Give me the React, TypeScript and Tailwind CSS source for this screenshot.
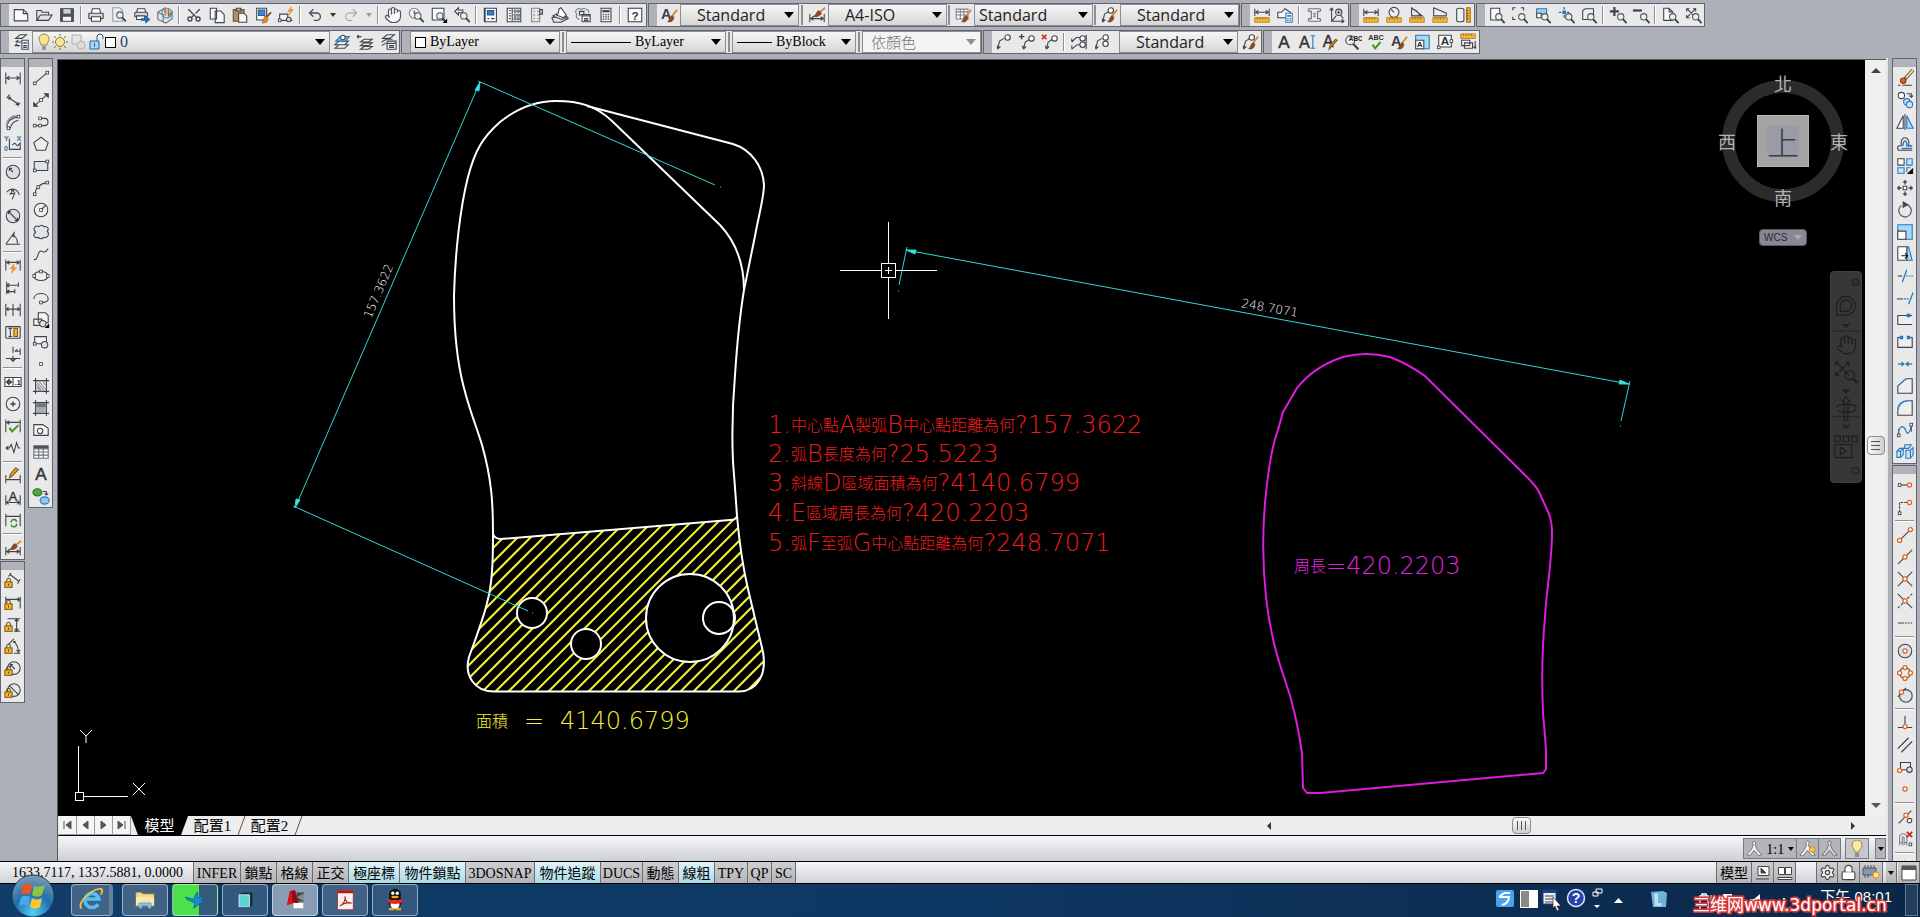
import React, { useState } from 'react';
import { Hand, Scissors, Undo2, Redo2, Settings, Lock } from 'lucide-react';

const Lens = ({ x = 12, y = 11 }: { x?: number; y?: number }) => (
  <>
    <circle cx={x} cy={y} r="3.5" fill="#e6f0ee" stroke="#4d5a5a" />
    <path d={`M${x + 2.5} ${y + 2.5}l4 4.5`} stroke="#3b4444" strokeWidth="2" />
  </>
);

const Brush = () => (
  <>
    <path d="M19 4l-6 8" stroke="#d78a3c" strokeWidth="2" />
    <path d="M13.500 10.500l2 2c-.5 4-3 6-7 5 2-1 2-5 5-7z" fill="#8a4a24" stroke="#6b3516" strokeWidth=".6" />
  </>
);

const Ruler = ({ y = 13 }: { y?: number }) => (
  <>
    <rect x="2" y={y} width="16" height="5" fill="#f2b632" stroke="#a9710c" strokeWidth=".8" />
    <path d={`M5 ${y}v2M8 ${y}v2M11 ${y}v2M14 ${y}v2`} stroke="#7a4e05" strokeWidth=".8" />
  </>
);

const Node = ({ x, y }: { x: number; y: number }) => (
  <rect x={x - 1.5} y={y - 1.5} width="3" height="3" fill="#fff" stroke="#33373d" strokeWidth=".9" />
);

const Snap = ({ x, y }: { x: number; y: number }) => (
  <circle cx={x} cy={y} r="2.300" fill="#fff" stroke="#e2641c" strokeWidth="1.400" />
);

const LockBadge = () => (
  <>
    <path d="M3 11V9a2 2 0 0 1 4 0v2" stroke="#6b4a10" />
    <rect x="1" y="11" width="8" height="6" fill="#f2b632" stroke="#8a5a0c" />
    <path d="M5 13v2" stroke="#5a3505" />
  </>
);

const dim = 'M2 4v13M18 4v13M2 10h16M6 8l-3 2 3 2M14 8l3 2-3 2';
const leader = 'M3 18l2-9 5-3M3 18l-.500-4M3 18l3-3';

const icons: Record<string, React.ReactNode> = {
  new: <path d="M2.500 4h10l5 4.500v8h-15zM12.500 4v4.500h5" fill="#f8f9fa" />,
  open: <path d="M2 16V5h5l1 2h7v3M2 16l4-6h13l-4 6z" fill="#e2e5e8" />,
  save: (
    <>
      <path d="M3 3h14v14H3z" fill="#4c525a" />
      <path d="M6 3.500h8v5H6z" fill="#cdd3d8" stroke="none" />
      <path d="M5.500 12h9v4.500h-9z" fill="#f4f4f4" stroke="none" />
    </>
  ),
  print: (
    <>
      <path d="M5 8l1-5h8l1 5" fill="#fff" />
      <rect x="2" y="8" width="16" height="6" rx="1" fill="#d5d8db" />
      <path d="M5 12h10v5H5z" fill="#fff" />
    </>
  ),
  preview: (
    <>
      <path d="M3 2h8l3 3v12H3z" fill="#e9edf0" stroke="#9aa0a8" />
      <Lens x={11} y={10} />
    </>
  ),
  plot: (
    <>
      <path d="M4 7l1-4h8l1 4" fill="#fff" />
      <rect x="2" y="7" width="14" height="5" rx="1" fill="#d5d8db" />
      <path d="M4 11h9v4H4z" fill="#fff" />
      <path d="M9 14h5v-3l5 4-5 4v-3H9z" fill="#1f6fc4" stroke="#164f8d" strokeWidth=".6" />
    </>
  ),
  web: (
    <>
      <path d="M2 7l8-5 8 4v8l-7 5-9-4z" fill="#dfe6ea" stroke="#6b7179" />
      <circle cx="12" cy="8" r="5.500" fill="#bfe0f4" stroke="#4f93bf" />
      <path d="M9 4c0 3 1 4 3 4l2-4z" fill="#e2b13c" stroke="none" />
      <path d="M12 8l3 4c2-1 2-3 2-5z" fill="#57ab57" stroke="none" />
      <path d="M10 3v8M14 3v9" stroke="#d0532e" />
      <path d="M2 7l6 3v8" stroke="#6b7179" />
    </>
  ),
  cut: <Scissors x="1" y="1" width="18" height="18" strokeWidth={2} stroke="#3f444c" transform="rotate(-90 10 10)" />,
  copy: <path d="M2.500 2.500h7v12h-7zM8 5.500h6l4 4v9H8z" fill="#f6f7f8" />,
  paste: (
    <>
      <path d="M2.500 4h12v13h-12z" fill="#b58c5c" stroke="#6d5233" />
      <path d="M6 2.500h5v3H6z" fill="#bbb" />
      <path d="M8.500 8h6l3 3v7h-9z" fill="#f6f7f8" />
    </>
  ),
  match: (
    <>
      <path d="M3 2.500h11v13H3z" fill="#fff" />
      <path d="M5 4.500h7v6H5z" fill="#3b87cd" stroke="#2461a0" />
      <path d="M19 7l-5 5" stroke="#8a4a1c" strokeWidth="2" />
      <path d="M12 11l4 3-2 4-5 1z" fill="#e38b24" stroke="#a45a10" strokeWidth=".7" />
    </>
  ),
  blockedit: (
    <>
      <path d="M3 9h9v7H3zM12 16h5" fill="#f4f4f4" />
      <Node x={3} y={16} />
      <circle cx="13" cy="15" r="2.500" fill="#ddd" />
      <path d="M16 1l-4 5h3l-2 4 5-6h-3z" fill="#f6a21b" stroke="#d97b06" strokeWidth=".6" />
    </>
  ),
  undo: <Undo2 x="1" y="1" width="18" height="18" strokeWidth={2} stroke="#4c525a" />,
  redo: <Redo2 x="1" y="1" width="18" height="18" strokeWidth={1.5} stroke="#9b9ea4" />,
  hand: <Hand x="0" y="0" width="20" height="20" strokeWidth={1.6} stroke="#4c525a" fill="#fafafa" />,
  zoomrt: (
    <>
      <circle cx="8" cy="8" r="5.500" fill="#f4f4f4" stroke="#7c828a" />
      <path d="M8 5v3h3" />
      <Lens x={12} y={11} />
    </>
  ),
  zoomwin: (
    <>
      <path d="M2.500 2.500h13v13h-13z" fill="#fafafa" />
      <Lens x={11} y={11} />
      <path d="M19 14v5h-5z" fill="#000" stroke="none" />
    </>
  ),
  zoomprev: (
    <>
      <path d="M2 6l4-4v2.500h5v3H6V10z" fill="#dfe3e6" />
      <Lens x={12} y={11} />
    </>
  ),
  props: (
    <>
      <path d="M3 2.500h13v15H3z" fill="#fff" />
      <path d="M6 5h7v5H6z" fill="#2f7fc9" stroke="#1d5a96" />
      <path d="M6 14h2M10 14h4" />
      <path d="M3 2.500v15" strokeWidth="2" />
    </>
  ),
  center: (
    <>
      <path d="M2.500 2.500h15v15h-15z" fill="#fff" />
      <path d="M4.500 5h2M4.500 8h2M4.500 11h2M4.500 14h2M8 3v14" />
      <path d="M10 4.500h2.500V7H10zM14 4.500h2V7h-2zM10 9h2.500v2.500H10zM14 9h2v2.500h-2zM10 13h2.500v2.500H10zM14 13h2v2.500h-2z" fill="#b5c4d4" strokeWidth=".8" />
    </>
  ),
  palettes: (
    <>
      <path d="M4 2.500h9v15H4z" fill="#eee" stroke="#7c828a" />
      <path d="M13 4h3v5h-3z" fill="#ccc" />
      <path d="M6 5h2v2H6zM10 5h2v2h-2zM6 9h2v2H6zM10 9h2v2h-2zM6 13h2v2H6zM10 13h2v2h-2z" fill="#aaa" stroke="none" />
    </>
  ),
  sheets: (
    <>
      <path d="M1 13l10-2 8 3-8 4H3z" fill="#dfe2e5" />
      <path d="M2 11l4-2 12 3-6 3z" fill="#eef0f2" />
      <path d="M9 3l2-1 6 8-3 3-8-3 2-2z" fill="#fff" />
    </>
  ),
  markup: (
    <>
      <path d="M3 4c2-2 4-1 5 0 2-2 5-1 6 0 3 0 3 3 2 4M3 4c-2 2-1 4 0 5-1 3 0 5 3 6" fill="none" stroke="#7c828a" />
      <path d="M6 6h5v4H6z" fill="#d9dde0" />
      <path d="M9 9.500h9v8H9z" fill="#fff" />
      <path d="M9 11h9M11 14h5M11 16h5" />
    </>
  ),
  calc: (
    <>
      <path d="M4.500 2.500h11v15h-11z" fill="#eceef0" />
      <path d="M6 4.500h8v2.500H6z" fill="#3f444c" stroke="none" />
      <path d="M6.500 9.500h7M6.500 12h7M6.500 14.500h7" strokeDasharray="1.500 1.200" strokeWidth="1.500" />
    </>
  ),
  help: (
    <>
      <rect x="2.500" y="2.500" width="15" height="15" fill="#fafafa" />
      <text x="10" y="15" textAnchor="middle" fontSize="13" fontWeight="bold" fill="#33373d" stroke="none">?</text>
    </>
  ),
  textstyle: (
    <>
      <text x="1" y="14" fontSize="16" fontWeight="bold" fill="#3a3f46" stroke="none">A</text>
      <Brush />
    </>
  ),
  dimstyle: (
    <>
      <path d="M2 9v9M18 9v9M2 14h16M6 12l-3 2 3 2M14 12l3 2-3 2" />
      <path d="M19 2l-6 5" stroke="#d78a3c" strokeWidth="2" />
      <path d="M12 5l3 3c-2 4-6 4-10 4 4-1 4-6 7-7z" fill="#8a4a24" stroke="#6b3516" strokeWidth=".6" />
    </>
  ),
  tablestyle: (
    <>
      <path d="M2.500 3.500h13v11h-13zM2.500 6.500h13M2.500 10h13M7 3.500v11M11 3.500v11" fill="#fff" stroke="#7c828a" />
      <Brush />
    </>
  ),
  leaderstyle: (
    <>
      <path d={leader} />
      <circle cx="12" cy="5" r="3" fill="#fff" />
      <Brush />
    </>
  ),
  distance: (
    <>
      <path d="M2 3v8M18 3v8M2 7h16M6 5L3 7l3 2M14 5l3 2-3 2" />
      <Ruler />
    </>
  ),
  area: (
    <>
      <path d="M2 13V7h4l4-4 6 4v6z" fill="#f6f7f8" />
      <path d="M11 8h7v10h-7z" fill="#fff" stroke="#2b77bb" />
      <path d="M12.500 10h4v2h-4z" fill="#2b77bb" stroke="none" />
      <path d="M12.500 14h4M12.500 16h4" stroke="#2b77bb" strokeWidth="1.400" strokeDasharray="1.500 1" />
    </>
  ),
  list: (
    <>
      <path d="M5 3h11c2 0 2 3 0 3h-2v8h2c2 0 2 3 0 3H5c-2 0-2-3 0-3h2V6H5c-2 0-2-3 0-3z" fill="#eceef0" stroke="#6b7179" />
      <path d="M9 8h3M9 10h3M9 12h3" stroke="#6b7179" />
    </>
  ),
  locate: (
    <>
      <path d="M4 2v15h14M4 2L2 5M4 2l2 3M18 17l-3-2M18 17l-3 2M4 17l5-6" />
      <circle cx="12" cy="7" r="3.500" />
      <path d="M12 5v4M10 7h4M14 10l3 4" />
    </>
  ),
  radius: (
    <>
      <circle cx="10" cy="7" r="5.500" fill="#eef0f1" />
      <path d="M10 7L7 4" />
      <Ruler />
    </>
  ),
  angle: (
    <>
      <path d="M4 2v9h12zM4 3c5 1 8 4 9 8" />
      <Ruler />
    </>
  ),
  area2: (
    <>
      <path d="M3 2v9h14V8z" fill="#eef0f1" />
      <Ruler />
    </>
  ),
  volume: (
    <>
      <path d="M3 4c0-2 8-2 8 0v12c0 2-8 2-8 0z" fill="#eef0f1" />
      <path d="M14 2h4v16h-4z" fill="#f2b632" stroke="#a9710c" />
      <path d="M14 5h2M14 8h2M14 11h2M14 14h2" stroke="#7a4e05" />
    </>
  ),
  zwindow: (
    <>
      <path d="M3 2.500h10v13H3z" fill="#fafafa" />
      <Lens x={12} y={12} />
    </>
  ),
  zdynamic: (
    <>
      <path d="M2 5V2h3M11 2h3v3M2 12v3h3" />
      <Lens x={12} y={12} />
    </>
  ),
  zscale: (
    <>
      <path d="M3 3h11v9H3z" fill="#9fd0f0" stroke="#2b77bb" />
      <path d="M3 8h5v5H3z" fill="#fff" />
      <Lens x={12} y={12} />
    </>
  ),
  zcenter: (
    <>
      <path d="M6 5h4v4H6z" fill="#2b77bb" stroke="none" />
      <path d="M8 1v3M8 10v3M2 7h3M11 7h3" stroke="#2b77bb" strokeWidth="1.500" />
      <Lens x={13} y={12} />
    </>
  ),
  zobject: (
    <>
      <path d="M3 5l3-2h9v10l-3 2H3z" fill="#eef0f1" />
      <Lens x={12} y={12} />
    </>
  ),
  zin: (
    <>
      <path d="M6 1v10M1 6h10" strokeWidth="2.500" />
      <Lens x={13} y={12} />
    </>
  ),
  zout: (
    <>
      <path d="M1 5h10" strokeWidth="2.500" />
      <Lens x={13} y={12} />
    </>
  ),
  zall: (
    <>
      <path d="M3 2.500h6l4 4V16H3zM9 2.500v4h4" fill="#fafafa" />
      <Lens x={13} y={12} />
    </>
  ),
  zextents: (
    <>
      <path d="M3 3l10 10M13 3L3 13M3 6V3h3M10 3h3v3M3 10v3h3" />
      <Lens x={13} y={12} />
    </>
  ),
  layerprops: (
    <>
      <path d="M4 6l5-4h7l-5 4zM4 6h7M4 10h7M3 14h6M4 10l3-2M3 14l3-2" fill="#eef0f1" />
      <path d="M11 8h7v10h-7z" fill="#fff" />
      <path d="M12.500 10h4v2h-4z" fill="#2b77bb" stroke="none" />
      <path d="M12.500 14h4M12.500 16h4" />
    </>
  ),
  layercur: (
    <>
      <path d="M2 17l5-4h10l-4 4zM2 13l5-4h10l-4 4z" fill="#eef0f1" />
      <path d="M3 9l5-5h10l-4 5z" fill="#7fc1ee" stroke="#2b77bb" />
      <circle cx="11" cy="5" r="2.500" fill="#fff" />
    </>
  ),
  layerprev: (
    <>
      <path d="M5 18l4-3h9l-4 3zM5 14l4-3h9l-4 3zM5 10l4-3h9l-4 3z" fill="#eef0f1" />
      <path d="M1 4h5M1 4l2-2M1 4l2 2" />
    </>
  ),
  layerstate: (
    <>
      <path d="M4 6l5-4h8l-5 4zM3 10l5-3h7M3 14l5-3" fill="#eef0f1" />
      <path d="M9 9h10v9H9zM9 11.500h10M11 14h6M11 16h6" fill="#fff" />
    </>
  ),
  leader: (
    <>
      <path d={leader} />
      <circle cx="14" cy="5" r="3" fill="#fff" />
    </>
  ),
  leaderadd: (
    <>
      <path d="M6 18l2-8 5-3M6 18l-1-4M6 18l3-3" />
      <circle cx="15" cy="6" r="3" fill="#fff" />
      <path d="M4 1v6M1 4h6" strokeWidth="1.500" />
    </>
  ),
  leaderdel: (
    <>
      <path d="M6 18l2-8 5-3M6 18l-1-4M6 18l3-3" />
      <circle cx="15" cy="6" r="3" fill="#fff" />
      <path d="M1 2l5 5M6 2L1 7" stroke="#c8281e" strokeWidth="1.800" />
    </>
  ),
  leaderalign: (
    <>
      <path d="M2 10l5-5h4M2 18l6-5h3M2 10V6M2 18v-4M18 2v16" />
      <circle cx="14" cy="6" r="3" fill="#fff" />
      <circle cx="14" cy="13" r="3" fill="#fff" />
    </>
  ),
  leadercollect: (
    <>
      <path d="M3 18l2-9 5-3M3 18v-4M3 18l3-3" />
      <circle cx="14" cy="5" r="3" fill="#fff" />
      <circle cx="14" cy="12" r="3" fill="#fff" />
    </>
  ),
  mtext: <text x="10" y="17" textAnchor="middle" fontSize="19" fill="#333" stroke="#333" strokeWidth=".5">A</text>,
  dtext: (
    <>
      <text x="7" y="17" textAnchor="middle" fontSize="18" fill="#333" stroke="#333" strokeWidth=".5">A</text>
      <path d="M14 3h5M16.500 3v14M14 17h5" stroke="#2b77bb" />
    </>
  ),
  edittext: (
    <>
      <text x="8" y="15" textAnchor="middle" fontSize="18" fill="#333" stroke="#333" strokeWidth=".5">A</text>
      <path d="M18 8l-7 8-2 2 1-4 6-7z" fill="#f0a22e" stroke="#8a5312" />
    </>
  ),
  find: (
    <>
      <circle cx="7" cy="8" r="5" fill="#e2eef0" />
      <path d="M10 12l6 6" strokeWidth="2.500" />
      <text x="13" y="9" textAnchor="middle" fontSize="7" fontWeight="bold" fill="#222" stroke="none">ABC</text>
    </>
  ),
  spell: (
    <>
      <text x="10" y="8" textAnchor="middle" fontSize="8" fontWeight="bold" fill="#333" stroke="none">ABC</text>
      <path d="M6 13l3 4 6-7" stroke="#3c9a1e" strokeWidth="2.200" />
    </>
  ),
  scaletext: (
    <>
      <path d="M3 2.500h15v15H3z" fill="#a9daf5" stroke="#2b77bb" />
      <path d="M3 8h9v9.500H3z" fill="#fff" />
      <text x="7.500" y="16" textAnchor="middle" fontSize="9" fontWeight="bold" fill="#222" stroke="none">A</text>
    </>
  ),
  justify: (
    <>
      <path d="M3 2.500h14v13H3z" fill="#fff" />
      <text x="10" y="13.500" textAnchor="middle" fontSize="13" fontWeight="bold" fill="#333" stroke="none">A</text>
      <Node x={3} y={16} />
      <Node x={17} y={9} />
    </>
  ),
  space: (
    <>
      <Ruler y={1} />
      <path d="M3 8h9v6H3zM6 11h9v6H6zM18 9v8M16 15l2 2 1-2" fill="#fff" />
    </>
  ),
  // dimension toolbar
  linear: <path d={dim} />,
  aligned: <path d="M3 8l3-4M15 17l3-4M5 7l11 8M5 7h3M5 7l1 3M16 15h-3M16 15l-1-3" />,
  arclen: (
    <>
      <path d="M3 16C4 9 9 5 16 4M7 17c1-5 4-8 9-9" />
      <path d="M3 13C4 8 8 4 13 3" strokeWidth="2" stroke="#8a9098" />
      <Node x={16} y={4} />
      <Node x={5} y={17} />
    </>
  ),
  ordinate: (
    <>
      <path d="M6 4v12h12V9l-3 3-3-3-3 2" />
      <text x="0" y="7" fontSize="8" fontWeight="bold" fill="#2b77bb" stroke="none">Y</text>
      <text x="14" y="7" fontSize="8" fontWeight="bold" fill="#2b77bb" stroke="none">X</text>
      <text x="0" y="18" fontSize="8" fontWeight="bold" fill="#2b77bb" stroke="none">0</text>
    </>
  ),
  dimrad: (
    <>
      <circle cx="10" cy="10" r="7.500" fill="#dcdfe2" />
      <path d="M10 10L6 6M6 9V6h3" />
    </>
  ),
  jogged: <path d="M3 8C8 2 15 4 17 11M10 5l-3 5 5-1-3 7M10 5l-2 1M10 5l1 3" />,
  diameter: (
    <>
      <circle cx="10" cy="10" r="7.500" fill="#dcdfe2" />
      <path d="M5 5l10 10M5 8V5h3M15 12v3h-3" />
    </>
  ),
  angular: <path d="M2 17h16M2 17L12 3M9 7c4 1 6 4 6 9M9 7l3-1M9 7l2 2" />,
  quick: (
    <>
      <path d="M2 3v12M18 3v12M2 6h16M6 4L3 6l3 2M14 4l3 2-3 2" />
      <path d="M11 8l-4 5h3l-2 5 6-6h-3z" fill="#f6a21b" stroke="#d97b06" strokeWidth=".6" />
    </>
  ),
  baseline: <path d="M3 3v14M16 4v5M12 11v5M3 7h13M3 14h9M6 5L3 7l3 2M6 12l-3 2 3 2" />,
  continue: <path d="M2 3v14M10 3v14M18 3v14M2 9h16M5 7L3 9l2 2M15 7l2 2-2 2" />,
  dimspace: (
    <>
      <path d="M2 4v13M18 4v13M2 4h16M2 17h16M7 6v9M5 6h4M5 15h4" />
      <path d="M11 6h4v9h-4z" fill="#f2b632" stroke="#8a5a0c" />
    </>
  ),
  dimbreak: <path d="M10 2v7M10 12v7M2 15h16M7 15l3 3 3-3M12 7h6M18 4v7M12 7l3-2" />,
  tolerance: (
    <>
      <path d="M1 5h18v10H1zM10 5v10" fill="#fff" />
      <path d="M5.500 6.500v7M2 10h7" strokeWidth="1.600" />
      <circle cx="5.500" cy="10" r="2" />
      <text x="12" y="13.500" fontSize="8" fontWeight="bold" fill="#222" stroke="none">.1</text>
    </>
  ),
  centermark: (
    <>
      <circle cx="10" cy="10" r="7.500" fill="#eceef0" />
      <path d="M10 7v6M7 10h6" strokeWidth="1.500" />
    </>
  ),
  inspect: (
    <>
      <path d="M2 3v14M18 3v14M2 6h16M6 4L3 6l3 2" />
      <path d="M6 12l3 4 7-7" stroke="#3c9a1e" strokeWidth="2.200" />
    </>
  ),
  joglin: <path d="M2 10h4l2-4 3 9 3-11 2 6h2M2 10l3-2M2 10l3 2" />,
  dimedit: (
    <>
      <path d="M2 9v9M18 9v9M2 14h16" />
      <path d="M16 3l-7 7-3 2 1-4 6-7z" fill="#f0a22e" stroke="#8a5312" />
    </>
  ),
  dimtedit: (
    <>
      <path d="M2 7v11M18 7v11M2 15h16M5 13l-2 2 2 2M15 13l2 2-2 2" />
      <text x="10" y="13" textAnchor="middle" fontSize="14" fill="#333" stroke="#333" strokeWidth=".4">A</text>
    </>
  ),
  dimupdate: (
    <>
      <path d="M2 3v14M18 3v14M2 6h16" />
      <path d="M8 13a3 3 0 0 1 6-1M14 14a3 3 0 0 1-6 1" stroke="#3c8a2e" strokeWidth="1.600" />
    </>
  ),
  dcalign: (
    <>
      <path d="M7 3l9 7M8 1l-3 4M18 8l-3 5" />
      <LockBadge />
    </>
  ),
  dchoriz: (
    <>
      <path d="M2 3v7M18 3v13M2 6h16M15 4l3 2-3 2" />
      <LockBadge />
    </>
  ),
  dcvert: (
    <>
      <path d="M4 3h14M11 17h7M14 3v14M12 6l2-3 2 3M12 14l2 3 2-3" />
      <LockBadge />
    </>
  ),
  dcang: (
    <>
      <path d="M5 7l6-6M11 17h7M10 4c4 2 6 6 6 12M10 4h3M14 13l2 3 2-3" />
      <LockBadge />
    </>
  ),
  dcrad: (
    <>
      <circle cx="11" cy="9" r="7" />
      <path d="M12 10L7 5M7 8V5h3" />
      <LockBadge />
    </>
  ),
  dcdia: (
    <>
      <circle cx="11" cy="9" r="7" />
      <path d="M6 4l10 10" />
      <LockBadge />
    </>
  ),
  // draw toolbar
  line: (
    <>
      <path d="M3 16L17 4" />
      <Node x={3} y={16} />
      <Node x={17} y={4} />
    </>
  ),
  xline: (
    <>
      <path d="M2 17L18 3" />
      <path d="M2 17v-4l4 4zM18 3v4l-4-4z" fill="#3f444c" />
      <Node x={10} y={10} />
    </>
  ),
  pline: (
    <>
      <path d="M3 14h11c5 0 5-8 0-8h-4" />
      <Node x={3} y={14} />
      <Node x={9} y={14} />
      <Node x={9} y={6} />
    </>
  ),
  polygon: <path d="M10 2.500l8 6-3 8.500H5L2 8.500z" fill="#eceef0" />,
  rect: (
    <>
      <path d="M2.500 5h15v10h-15z" fill="#dfe3e7" />
      <Node x={17} y={5} />
      <Node x={3} y={15} />
    </>
  ),
  arc: (
    <>
      <path d="M3 17C4 9 9 5 17 4" />
      <Node x={3} y={17} />
      <Node x={7} y={9} />
      <Node x={17} y={4} />
    </>
  ),
  circle: (
    <>
      <circle cx="10" cy="10" r="7.500" fill="#eceef0" />
      <path d="M10 10l5-5" />
      <Node x={10} y={10} />
    </>
  ),
  revcloud: <path d="M4 10C0 6 4 2 8 4c2-2 4-2 5 0 5-1 6 3 4 5 3 4 0 8-4 7-2 2-4 2-6 0-4 1-7-2-3-6z" fill="#e3e6e9" />,
  spline: <path d="M2 16C6 18 6 9 9 7s4 5 9-3" />,
  ellipse: (
    <>
      <ellipse cx="10" cy="10" rx="8" ry="5" fill="#eceef0" />
      <Node x={2.5} y={10} />
      <Node x={17.5} y={10} />
      <Node x={10} y={5} />
    </>
  ),
  ellarc: (
    <>
      <path d="M2 11c0-8 16-8 16 0 0 3-4 4-8 4" />
      <Node x={10} y={15} />
    </>
  ),
  insert: (
    <>
      <path d="M7 2h8l3 3v8H7zM2 9h9v7H2z" fill="#f4f5f6" />
      <circle cx="12" cy="14" r="3.500" fill="#dfe3e7" />
      <path d="M19 14v5h-5z" fill="#000" stroke="none" />
    </>
  ),
  block: (
    <>
      <path d="M3 4h13v8H3z" fill="#f4f5f6" />
      <circle cx="14" cy="13" r="3.500" fill="#dfe3e7" />
      <Node x={3} y={12} />
    </>
  ),
  point: <Node x={10} y={10} />,
  hatch: (
    <>
      <path d="M1 4h18M1 16h18M4 1v18M16 1v18" />
      <path d="M5 11l4 5M5 8l6 8M5 5l8 10M8 5l7 9M12 5l3 4" stroke="#8a9098" />
    </>
  ),
  gradient: (
    <>
      <path d="M5 5h10v10H5z" fill="#a5acb3" stroke="none" />
      <path d="M5 5h10v4H5z" fill="#6f777f" stroke="none" />
      <path d="M1 4h18M1 16h18M4 1v18M16 1v18" />
    </>
  ),
  region: (
    <>
      <path d="M2 4h10l6 4v8H2z" fill="#f4f5f6" />
      <circle cx="9" cy="11" r="3" fill="#fff" />
    </>
  ),
  table: (
    <>
      <path d="M2 3h16v14H2zM2 6.500h16M2 10h16M2 13.500h16M7.500 3v14M12.500 3v14" fill="#fff" stroke="#6b7179" />
      <path d="M2 3h16v3H2z" fill="#4c525a" stroke="none" />
    </>
  ),
  addsel: (
    <>
      <ellipse cx="6" cy="6" rx="5" ry="4" fill="#4fa83d" stroke="#2e7320" />
      <ellipse cx="14" cy="15" rx="5" ry="4" fill="#8ccaf2" stroke="#2b77bb" />
      <path d="M12 5h4v4M14 7l2 2 2-2" />
    </>
  ),
  // modify toolbar
  erase: (
    <>
      <path d="M19 1l-9 10" stroke="#6b4a2a" strokeWidth="4" />
      <path d="M19 1l-8 9" stroke="#f1dfb0" strokeWidth="2" />
      <circle cx="8" cy="13" r="3" fill="#e2641c" stroke="#8a3a0c" />
      <path d="M2 18h3M7 18h11" />
    </>
  ),
  copyobj: (
    <>
      <circle cx="6" cy="5" r="3.500" fill="#fff" />
      <circle cx="12" cy="12" r="3.500" fill="#c9e6f8" stroke="#2b77bb" />
      <circle cx="15" cy="15" r="3.500" fill="#c9e6f8" stroke="#2b77bb" />
      <path d="M12 3h5v4M15 5l2 2 2-2" />
    </>
  ),
  mirror: (
    <>
      <path d="M8 3v14H1z" fill="#fff" />
      <path d="M12 3v14h7z" fill="#a9daf5" stroke="#2b77bb" />
      <path d="M10 1v18" />
    </>
  ),
  offset: (
    <>
      <path d="M18 17H4c-3 0-3-5 0-5h2C3 0 17 0 14 12h4" />
      <path d="M18 15H6M8 12c-1-7 5-7 4 0h6" stroke="#2b77bb" strokeWidth="1.600" />
    </>
  ),
  array: (
    <>
      <path d="M2 2h7v7H2z" fill="#fff" />
      <path d="M12 2h6v7h-6zM2 12h7v6H2z" fill="#c9e6f8" stroke="#2b77bb" />
      <path d="M19 12v7h-7z" fill="#111" stroke="none" />
      <path d="M12 17v-5h4" stroke="#2b77bb" />
    </>
  ),
  move: (
    <>
      <path d="M8 8h4v4H8z" fill="#fff" />
      <path d="M10 2v4M10 14v4M2 10h4M14 10h4" strokeWidth="1.500" />
      <path d="M7 4l3-3 3 3zM7 16l3 3 3-3zM4 7l-3 3 3 3zM16 7l3 3-3 3z" fill="#3f444c" stroke="none" />
    </>
  ),
  rotate: (
    <>
      <path d="M12 4a7 7 0 1 1-6 1" stroke="#5d6269" strokeWidth="1.500" />
      <path d="M8 1l5 3-5 3z" fill="#3f444c" />
    </>
  ),
  scale: (
    <>
      <path d="M2 2h16v16H2z" fill="#a9daf5" stroke="#2b77bb" />
      <path d="M2 9h9v9H2z" fill="#fff" />
    </>
  ),
  stretch: (
    <>
      <path d="M12 2h2l4 15h-6z" fill="#a9daf5" stroke="#2b77bb" />
      <path d="M2 2h10v15H2z" fill="#fff" />
      <path d="M6 12h7M10 9l3 3-3 3" stroke="#111" />
    </>
  ),
  trim: (
    <>
      <path d="M2 10h5" />
      <path d="M12 3L7 17" stroke="#2b77bb" strokeWidth="1.400" />
      <path d="M11 10h8" stroke="#2b77bb" strokeDasharray="2 1" />
    </>
  ),
  extend: (
    <>
      <path d="M1 11h7" />
      <path d="M9 11h5" stroke="#2b77bb" strokeDasharray="2 1" />
      <path d="M19 4l-5 13" stroke="#2b77bb" strokeWidth="1.400" />
    </>
  ),
  breakpt: (
    <>
      <path d="M18 15H2V5h16" fill="#eceef0" />
      <path d="M12 3h4v4h-4z" fill="#2b77bb" stroke="none" />
    </>
  ),
  break: (
    <>
      <path d="M4 5H2v11h16V5h-2" fill="#eceef0" />
      <path d="M4 3h4v4H4zM12 3h4v4h-4z" fill="#2b77bb" stroke="none" />
    </>
  ),
  join: (
    <>
      <path d="M2 10h6M12 10h6" />
      <path d="M6 7l4 3-4 3zM14 7l-4 3 4 3z" fill="#2b77bb" stroke="none" />
    </>
  ),
  chamfer: (
    <>
      <path d="M11 2h7v16H2v-8" fill="#eceef0" />
      <path d="M2 10l9-8" stroke="#2b77bb" strokeWidth="1.600" />
    </>
  ),
  fillet: (
    <>
      <path d="M14 2h4v16H2v-5" fill="#eceef0" />
      <path d="M2 13C2 6 7 2 14 2" stroke="#2b77bb" strokeWidth="1.600" />
    </>
  ),
  blend: (
    <>
      <path d="M3 17V9M17 4v8" />
      <path d="M3 11c3-8 7-4 8 0s4 4 6-6" stroke="#2b77bb" strokeWidth="1.400" />
      <Node x={3} y={16} />
      <Node x={17} y={4} />
    </>
  ),
  explode: (
    <path d="M1 9l3-3h4v7l-3 3H1zM1 9h4v7M5 9l3-3M10 2h7l-3 4H9zM11 8h5v9h-5zM16 8l3-3v8l-3 4" fill="#c9e6f8" stroke="#2b77bb" strokeWidth="1.200" />
  ),
  // object snap toolbar
  track: (
    <>
      <path d="M5 10h8" />
      <Node x={4} y={10} />
      <Snap x={15} y={10} />
    </>
  ),
  from: (
    <>
      <path d="M4 16V5h9" strokeDasharray="3 1" />
      <Node x={4} y={17} />
      <Snap x={15} y={5} />
    </>
  ),
  endpoint: (
    <>
      <path d="M4 16L16 4" />
      <Snap x={4} y={16} />
      <Snap x={16} y={4} />
    </>
  ),
  midpoint: (
    <>
      <path d="M2 18L18 2" />
      <Snap x={10} y={10} />
    </>
  ),
  intersect: (
    <>
      <path d="M2 18L18 2M2 2l16 16" />
      <Snap x={10} y={10} />
    </>
  ),
  appint: (
    <>
      <path d="M2 2l16 16" />
      <path d="M2 18L18 2" strokeDasharray="3 2" />
      <Snap x={10} y={10} />
    </>
  ),
  extension: <path d="M2 10h16" strokeDasharray="7 1 2 1 2 1 2 1" />,
  center2: (
    <>
      <circle cx="10" cy="10" r="7.500" fill="#dfe3e7" />
      <Snap x={10} y={10} />
    </>
  ),
  quadrant: (
    <>
      <circle cx="10" cy="10" r="6" fill="#eceef0" />
      <Snap x={10} y={4} />
      <Snap x={10} y={16} />
      <Snap x={4} y={10} />
      <Snap x={16} y={10} />
    </>
  ),
  tangent: (
    <>
      <circle cx="11" cy="11" r="7" fill="#dfe3e7" />
      <path d="M2 12l9-10" />
      <Snap x={6} y={7} />
    </>
  ),
  perp: (
    <>
      <path d="M10 2v12M2 15h16" />
      <Snap x={10} y={14} />
    </>
  ),
  parallel: <path d="M2 14L14 2M6 18L18 6" strokeWidth="1.400" />,
  insertsnap: (
    <>
      <path d="M5 5h11v8H5z" fill="#eceef0" />
      <circle cx="15" cy="13" r="3" fill="#dfe3e7" />
      <Snap x={4} y={14} />
    </>
  ),
  nodesnap: <Snap x={10} y={10} />,
  nearest: (
    <>
      <path d="M3 17L17 3" />
      <Snap x={11} y={8} />
      <circle cx="15" cy="14" r="2.500" fill="#fff" />
    </>
  ),
  none: (
    <>
      <path d="M4 17V8c0-5 8-5 8 0v9M7 17V9c0-2 2-2 2 0v8M4 14h3M9 14h3" stroke="#7c828a" />
      <path d="M12 2l6 6M18 2l-6 6" stroke="#c8281e" strokeWidth="2" />
      <Node x={16} y={16} />
    </>
  ),
  osnap: <path d="M4 17V9c0-7 12-7 12 0v8h-4V9c0-2-4-2-4 0v8z" fill="#b8463e" stroke="#6b1f1a" />,
};

const Icon = ({ name }: { name: string }) => (
  <svg viewBox="0 0 20 20" className="size-[18px] shrink-0" fill="none" stroke="#3f444c" strokeWidth="1.200" fontFamily="Liberation Sans, sans-serif">
    {icons[name]}
  </svg>
);

const Caret = ({ muted = false }: { muted?: boolean }) => (
  <svg viewBox="0 0 10 6" className="h-[6px] w-[10px] shrink-0" aria-hidden="true">
    <path d="M0 0h10L5 6z" fill={muted ? '#8d8f94' : '#000'} />
  </svg>
);

const Tools = ({ items }: { items: string[] }) => (
  <>
    {items.map((item, i) => {
      if (item === '|') return <span key={i} className="mx-[2px] h-[18px] w-[2px] border-l border-[#8e9096] bg-white" />;
      if (item === 'v' || item === 'w')
        return (
          <button key={i} type="button" aria-label="history" className="flex h-[22px] w-[13px] items-center justify-center">
            <svg viewBox="0 0 6 4" className="h-1 w-[6px]"><path d="M0 0h6L3 4z" fill={item === 'v' ? '#333' : '#999'} /></svg>
          </button>
        );
      return (
        <button key={i} type="button" aria-label={item} className="flex h-[22px] w-[23px] shrink-0 items-center justify-center hover:bg-[#d5e6f5]">
          <Icon name={item} />
        </button>
      );
    })}
  </>
);

const Bar = ({ children }: { children: React.ReactNode }) => (
  <div className="flex h-6 shrink-0 items-center border border-[#63656d] bg-[#e9e9ea]">
    <span className="w-2 shrink-0 self-stretch bg-[#b0b1b9]" />
    {children}
  </div>
);

const VBar = ({ items }: { items: string[] }) => (
  <div className="flex w-[25px] shrink-0 flex-col items-center border border-[#63656d] bg-[#e9e9ea]">
    <span className="h-2 shrink-0 self-stretch bg-[#b0b1b9]" />
    {items.map((item, i) =>
      item === '|' ? (
        <span key={i} className="my-[2px] h-[2px] w-[19px] shrink-0 border-t border-[#8e9096] bg-white" />
      ) : (
        <button key={i} type="button" aria-label={item} className="flex h-[22px] w-[22px] shrink-0 items-center justify-center hover:bg-[#d5e6f5]">
          <Icon name={item} />
        </button>
      )
    )}
  </div>
);

interface ComboProps {
  label: string;
  value: string;
  className: string;
  selectClass?: string;
  lead?: React.ReactNode;
  disabled?: boolean;
}

const Combo = ({ label, value, className, selectClass = '', lead, disabled }: ComboProps) => (
  <label
    className={`flex h-[22px] shrink-0 items-center border border-[#8c8e94] pr-1 ${
      disabled ? 'bg-[#f4f4f4]' : 'bg-gradient-to-b from-[#f6f6f6] to-[#d6d6d6]'
    } ${className}`}
  >
    {lead}
    <select aria-label={label} disabled={disabled} className={`min-w-0 flex-1 appearance-none bg-transparent leading-5 outline-none ${selectClass}`}>
      <option>{value}</option>
    </select>
    <Caret muted={disabled} />
  </label>
);

const Gap = () => <span className="mx-[2px] h-[20px] w-[2px] border-x border-[#8c8e94] bg-white" />;
const NarrowGap = () => <span className="mx-px h-[20px] w-[2px] border-x border-[#8c8e94] bg-white" />;
const Swatch = () => <span className="size-[11px] shrink-0 border border-black bg-white" />;

const sans = 'text-base text-[#222] font-["Open_Sans",sans-serif]';
const serif = 'text-sm text-black font-["Liberation_Serif",serif]';

const HeaderBars = () => (
  <header className="shrink-0 space-y-[3px] pt-[3px] pb-1">
    <div className="flex gap-px">
      <Bar>
        <Tools
          items={[
            'new', 'open', 'save', '|', 'print', 'preview', 'plot', 'web', '|', 'cut', 'copy', 'paste', 'match', 'blockedit', '|',
            'undo', 'v', 'redo', 'w', '|', 'hand', 'zoomrt', 'zoomwin', 'zoomprev', '|', 'props', 'center', 'palettes', 'sheets', 'markup', 'calc', '|', 'help',
          ]}
        />
      </Bar>
      <Bar>
        <Tools items={['textstyle']} />
        <Combo label="Text style" value="Standard" className="w-[119px]" selectClass={`pl-4 ${sans}`} />
        <Gap />
        <Tools items={['dimstyle']} />
        <Combo label="Dimension style" value="A4-ISO" className="w-[119px]" selectClass={`pl-4 ${sans}`} />
        <NarrowGap />
        <Tools items={['tablestyle']} />
        <Combo label="Table style" value="Standard" className="w-[119px]" selectClass={`pl-1 ${sans}`} />
        <NarrowGap />
        <Tools items={['leaderstyle']} />
        <Combo label="Multileader style" value="Standard" className="w-[119px]" selectClass={`pl-4 ${sans}`} />
      </Bar>
      <Bar><Tools items={['distance', 'area', '|', 'list', 'locate']} /></Bar>
      <Bar><Tools items={['distance', 'radius', 'angle', 'area2', 'volume']} /></Bar>
      <Bar><Tools items={['zwindow', 'zdynamic', 'zscale', 'zcenter', 'zobject', '|', 'zin', 'zout', '|', 'zall', 'zextents']} /></Bar>
    </div>
    <div className="flex gap-px">
      <Bar>
        <Tools items={['layerprops']} />
        <Combo
          label="Layer"
          value="0"
          className="w-[298px]"
          selectClass="pl-1 text-base text-[#1f3f73] font-['Liberation_Serif',serif]"
          lead={
            <>
              <svg viewBox="0 0 68 20" className="ml-1 h-5 w-[68px] shrink-0" fill="none" stroke="#555">
                <path d="M4 13c0-3-2-3-2-6a5 5 0 0 1 10 0c0 3-2 3-2 6z" fill="#f9e48f" stroke="#9b8a4a" />
                <path d="M5 15h4M5 17h4" />
                <circle cx="23" cy="10" r="4.500" fill="#f9e48f" stroke="#8a7a3a" />
                <path d="M23 2v2M23 16v2M15 10h2M29 10h2M17 4l2 2M27 14l2 2M29 4l-2 2M19 14l-2 2" stroke="#8a6a1a" />
                <path d="M35 3h9v9h-9z" fill="#e4e4e4" stroke="#b0b0b0" />
                <circle cx="44" cy="13" r="4" fill="#dcdcdc" stroke="#b0b0b0" />
                <path d="M60 9V5a3 3 0 0 1 6 0v2" stroke="#2a5a80" />
                <path d="M53 9h9v8h-9z" fill="#a9daf5" stroke="#1f6aa5" />
                <path d="M57.500 11v4" stroke="#1f6aa5" />
              </svg>
              <Swatch />
            </>
          }
        />
        <Tools items={['layercur', 'layerprev', 'layerstate']} />
      </Bar>
      <Bar>
        <Combo label="Color" value="ByLayer" className="w-[150px] pl-1" selectClass={`pl-1 ${serif}`} lead={<Swatch />} />
        <Gap />
        <Combo label="Linetype" value="ByLayer" className="w-[160px] pl-1" selectClass={`pl-1 ${serif}`} lead={<span className="h-px w-[60px] shrink-0 bg-black" />} />
        <Gap />
        <Combo label="Lineweight" value="ByBlock" className="w-[124px] pl-1" selectClass={`pl-1 ${serif}`} lead={<span className="h-px w-[35px] shrink-0 bg-black" />} />
        <Gap />
        <Combo disabled label="Plot style" value="依顏色" className="w-[119px]" selectClass='pl-2 text-[15px] text-[#777] font-["Noto_Sans_CJK_TC",sans-serif] font-light' />
      </Bar>
      <Bar>
        <Tools items={['leader', 'leaderadd', 'leaderdel', '|', 'leaderalign', 'leadercollect']} />
        <Combo label="Leader style" value="Standard" className="ml-[6px] w-[119px]" selectClass={`pl-4 ${sans}`} />
        <Tools items={['leaderstyle']} />
      </Bar>
      <Bar><Tools items={['mtext', 'dtext', 'edittext', 'find', 'spell', 'textstyle', 'scaletext', 'justify', 'space']} /></Bar>
    </div>
  </header>
);

// Latin runs use the 24px text style, Chinese runs are 16px and sit slightly higher
const Mixed = ({ text }: { text: string }) => (
  <>
    {text.split(/([\u4e00-\u9fff]+)/).map((part, i) =>
      i % 2 ? (
        <tspan key={i} dy="-2" fontSize="16" fontFamily="Noto Sans CJK TC, sans-serif">{part}</tspan>
      ) : (
        <tspan key={i} dy={i ? 2 : 0}>{part}</tspan>
      )
    )}
  </>
);

const questions = [
  { y: 433, text: '1.中心點A製弧B中心點距離為何?157.3622' },
  { y: 462, text: '2.弧B長度為何?25.5223' },
  { y: 491, text: '3.斜線D區域面積為何?4140.6799' },
  { y: 521, text: '4.E區域周長為何?420.2203' },
  { y: 551, text: '5.弧F至弧G中心點距離為何?248.7071' },
];

const soleBottom =
  'M737 516C740 550 744 572 748 589L763 652C767 675 757 691 739 691.500H494C474 691.500 464 675 469 657C475 640 483 620 487 603C492 585 493 565 493 534Q495 539 501 539L730 520Q736 520 737 516Z';

const Drawing = () => (
  <svg className="block h-full w-full" fill="none" fontFamily="DejaVu Sans Light, DejaVu Sans, sans-serif" fontWeight="200">
    <defs>
      <clipPath id="heel">
        <path d={soleBottom} />
      </clipPath>
    </defs>
    <g transform="translate(-58 -60)">
      <g clipPath="url(#heel)" stroke="#f5f032" strokeWidth="2">
        {Array.from({ length: 34 }, (_, i) => {
          const x = 323 + Math.round(i * 13.23);
          return <path key={i} d={`M${x} 692l190 -190`} />;
        })}
      </g>
      <g stroke="#fff" strokeWidth="2">
        <path d={soleBottom} />
        <path d="M493 534C493 505 492 480 482 445C476 425 470 412 464 388C456 358 454 330 454 296C455 255 460 208 468 177C475 150 483 137 500 122C520 106 538 101 556 101C580 101 596 106 612 121L720 225C735 241 744 262 744 290C739 320 737 345 735 375C732 410 732 440 733 462Q736 500 737 516" />
        <path d="M587 106L733 144C752 150 763 167 764 185C764 197 759 214 755 236L744 290" />
        <circle cx="532" cy="613" r="15" fill="#000" />
        <circle cx="586" cy="644" r="15" fill="#000" />
        <circle cx="690" cy="618" r="44" fill="#000" />
        <circle cx="719" cy="618" r="16" />
      </g>
      <g stroke="#34d5d5" strokeWidth="1">
        <path d="M480 82L295 508M478 81L715 185M720 187h1M293 506L528 611M532 613h1" />
        <path d="M906 250L1629 384M907 247L899 285M898 291h1M1630 381L1621 421M1620 426h1" />
        <path d="M480 82l-5 8 4 1zM295 508l5-8-4-1zM906 250l9 4 1-4zM1629 384l-9-4-1 4z" fill="#34e5e5" />
      </g>
      <g fill="#fff" fontSize="12">
        <text transform="translate(371 319) rotate(-67)">157.3622</text>
        <text transform="translate(1241 307) rotate(10)">248.7071</text>
      </g>
      <g fill="#f01c1c" fontSize="24">
        {questions.map(q => (
          <text key={q.y} x="768" y={q.y}><Mixed text={q.text} /></text>
        ))}
      </g>
      <g fill="#f5f032" fontSize="24">
        <text x="476" y="729"><Mixed text="面積" /></text>
        <text x="524" y="729">=</text>
        <text x="560" y="729">4140.6799</text>
      </g>
      <text x="1294" y="574" fontSize="24" fill="#e020e0"><Mixed text="周長=420.2203" /></text>
      <path
        stroke="#e01be0"
        strokeWidth="2"
        d="M1283 412L1297 388C1308 374 1325 363 1343 357C1358 353 1374 353 1390 357C1403 362 1414 368 1425 376L1527 477Q1537 487 1540 494L1549 514Q1552 522 1552 533C1552 560 1546 595 1545 617C1541 660 1542 690 1543 713Q1545 735 1546 750V769L1543 773L1320 793H1307L1303 788L1302 753C1298 725 1292 700 1285 680C1276 655 1269 625 1266 597C1262 560 1262 530 1266 493C1269 465 1274 440 1278 430Z"
      />
      <g stroke="#fff" shapeRendering="crispEdges">
        <path d="M840 270.500h41M896 270.500h41M888.500 222v41M888.500 278v41M881.500 263.500h14v14h-14z" />
        <path d="M885 270.500h7M888.500 267v7" />
        <path d="M78.500 746v46M83 796.500h45M75.500 792.500h8v8h-8z" />
      </g>
      <g stroke="#fff">
        <path d="M80 730l6 6 6-6M86 736v7M133 783l12 12M145 783l-12 12" />
      </g>
    </g>
  </svg>
);

const ViewCube = () => (
  <div className="absolute top-[15px] right-[17px] w-[130px]">
    <div className="relative flex h-[132px] items-center justify-center font-['Noto_Sans_CJK_TC',sans-serif] text-lg leading-none text-[#b4b4b4]">
      <div className="absolute top-[5px] size-[122px] rounded-full border-[13px] border-[#2b2b2b]" />
      <span className="absolute -top-px">北</span>
      <span className="absolute top-[113px]">南</span>
      <span className="absolute left-0">西</span>
      <span className="absolute right-0">東</span>
      <button type="button" className="flex size-[52px] items-center justify-center border border-[#b4b4b4] bg-[#a3a3a3]">
        <span className="bg-[#999ca6] text-[32px] font-light leading-8 text-[#3b3d42]">上</span>
      </button>
    </div>
    <button type="button" className="mx-auto mt-[22px] flex h-[17px] w-12 items-center justify-between rounded border border-[#5c5d66] bg-[#878893] px-1 font-['Liberation_Sans',sans-serif] text-[10px] text-[#2c2c30]">
      WCS
      <svg viewBox="0 0 8 5" className="h-[5px] w-2"><path d="M0 0h8L4 5z" fill="#a9aab3" /></svg>
    </button>
  </div>
);

const NavBar = () => (
  <div className="absolute top-[211px] right-[3px] h-[212px] w-8 rounded border border-[#3f3f3f] bg-[#373737]">
    <svg viewBox="0 0 32 212" className="h-full w-full" fill="none" stroke="#1d1d1d" strokeWidth="1.200">
      <circle cx="26" cy="5" r="3.500" />
      <path d="M24 3l4 4M28 3l-4 4M2 57h28M2 148h28" strokeWidth=".800" />
      <path d="M6 30a10 10 0 1 1 10 10H6z" />
      <path d="M10 30a6 6 0 1 1 6 6h-6z" />
      <path d="M13 50h6l-3 3zM13 120h6l-3 3zM13 158h6l-3 3z" />
      <Hand x="5" y="60" width="23" height="23" strokeWidth={1.2} stroke="#1d1d1d" />
      <path d="M5 90l14 14M19 90L5 104M5 94v-4h4M15 90h4v4M5 100v4h4" />
      <circle cx="20" cy="104" r="5" />
      <path d="M24 108l4 4" strokeWidth="2" />
      <path d="M16 127l-4 5h2v20h4v-20h2zM6 139c0-5 21-5 21 0s-14 6-20 3" />
      <path d="M4 169h6v6H4zM13 169h6v6h-6zM22 169h6v6h-6zM4 178h18v14H4zM10 181l6 4-6 4z" />
      <circle cx="26" cy="206" r="3.500" />
    </svg>
  </div>
);

const navPaths = ['M3 3v8M10 3v8L5 7z', 'M9 3v8L4 7z', 'M4 3v8l5-4z', 'M3 3v8l5-4zM10 3v8'];

const SheetTabs = () => {
  const [tab, setTab] = useState('模型');
  return (
    <div className="flex h-[19px] shrink-0 bg-[#ededed] font-['Liberation_Serif','Noto_Sans_CJK_TC',serif] text-[15px] leading-[18px]">
      <div className="flex pl-px">
        {navPaths.map(d => (
          <button key={d} type="button" aria-label="tab scroll" className="flex w-[18px] items-center justify-center border-r border-b border-[#9a9a9a] bg-[#f4f4f4]">
            <svg viewBox="0 0 13 14" className="h-[14px] w-[13px]" fill="#555" stroke="#555"><path d={d} /></svg>
          </button>
        ))}
      </div>
      {['模型', '配置1', '配置2'].map(name => (
        <button
          key={name}
          type="button"
          onClick={() => setTab(name)}
          className={
            tab === name
              ? 'w-[57px] bg-black text-white [clip-path:polygon(0_0,100%_0,calc(100%-7px)_100%,7px_100%)]'
              : 'relative w-[57px] pr-2 text-black after:absolute after:inset-y-0 after:right-[3px] after:border-r after:border-[#555] after:-skew-x-[20deg]'
          }
        >
          {name}
        </button>
      ))}
      <div className="ml-auto flex w-[636px] items-center pr-[31px] pl-[17px]">
        <button type="button" aria-label="scroll left"><svg viewBox="0 0 4 8" className="h-2 w-1"><path d="M4 0v8L0 4z" fill="#333" /></svg></button>
        <div className="ml-[241px] flex h-[17px] w-[19px] items-center justify-center gap-[3px] rounded-sm border border-[#8b8b8b] bg-gradient-to-b from-[#fafafa] to-[#cfcfcf]">
          <span className="h-[9px] w-px bg-[#555]" /><span className="h-[9px] w-px bg-[#555]" /><span className="h-[9px] w-px bg-[#555]" />
        </div>
        <button type="button" aria-label="scroll right" className="ml-auto"><svg viewBox="0 0 4 8" className="h-2 w-1"><path d="M0 0v8l4-4z" fill="#333" /></svg></button>
      </div>
    </div>
  );
};

const VScroll = () => (
  <div className="flex w-[21px] shrink-0 flex-col items-center justify-between bg-[#efefef] py-2">
    <button type="button" aria-label="scroll up"><svg viewBox="0 0 10 5" className="h-[5px] w-[10px]"><path d="M0 5h10L5 0z" fill="#444" /></svg></button>
    <div className="mt-[14px] flex h-[19px] w-[18px] flex-col items-center justify-center gap-[3px] rounded-sm border border-[#8b8b8b] bg-gradient-to-r from-[#fafafa] to-[#cfcfcf]">
      <span className="h-px w-[9px] bg-[#555]" /><span className="h-px w-[9px] bg-[#555]" /><span className="h-px w-[9px] bg-[#555]" />
    </div>
    <button type="button" aria-label="scroll down"><svg viewBox="0 0 10 5" className="h-[5px] w-[10px]"><path d="M0 0h10L5 5z" fill="#555" /></svg></button>
  </div>
);

const Bulb = () => (
  <svg viewBox="0 0 14 18" className="h-[18px] w-[14px]" stroke="#9b8a4a">
    <path d="M5 12c0-3-3-3-3-7a5 5 0 0 1 10 0c0 4-3 4-3 7z" fill="#fbe9a0" />
    <path d="M5 14h4M5 16h4" stroke="#555" />
  </svg>
);

const Person = ({ fill, dot }: { fill: string; dot?: boolean }) => (
  <svg viewBox="0 0 18 18" className="size-[17px]" fill={fill} stroke="#555" strokeWidth=".800">
    <path d="M9 1c2 0 2 3 1 4l2 5 5 6-3 1-5-6-5 6-3-1 5-6 2-5C7 4 7 1 9 1z" />
    {dot && <circle cx="14" cy="10" r="3" fill="#ffc44a" stroke="#c87a10" />}
  </svg>
);

const CommandLine = () => (
  <div className="flex h-[26px] shrink-0 items-stretch border-t border-black bg-gradient-to-b from-[#f5f6f8] to-[#cdd0d6]">
    <div className="ml-auto flex py-[2px] font-['Liberation_Serif',serif] text-sm">
      <button type="button" className="flex w-[54px] items-center gap-1 border border-[#77797f] bg-[#b3b5ba] px-[2px]">
        <Person fill="#f2f2f2" />
        <span className="self-end leading-4">1:1</span>
        <svg viewBox="0 0 6 4" className="h-1 w-[6px]"><path d="M0 0h6L3 4z" /></svg>
      </button>
      <button type="button" aria-label="annotation visibility" className="flex w-[22px] items-center justify-center border border-l-0 border-[#77797f] bg-[#b3b5ba]"><Person fill="#f2f2f2" dot /></button>
      <button type="button" aria-label="auto scale" className="flex w-[22px] items-center justify-center border border-l-0 border-[#77797f] bg-[#b3b5ba]"><Person fill="#d5d5d5" /></button>
      <button type="button" aria-label="lights" className="mx-1 flex w-6 items-center justify-center border border-[#77797f] bg-[#c6c8cc]"><Bulb /></button>
      <button type="button" aria-label="menu" className="ml-[2px] flex w-[11px] items-center justify-center border border-[#77797f] bg-[#b3b5ba]"><svg viewBox="0 0 6 4" className="h-1 w-[6px]"><path d="M0 0h6L3 4z" /></svg></button>
    </div>
  </div>
);

const modes = [
  { name: 'INFER', on: false, w: 'w-[47px]' },
  { name: '鎖點', on: false, w: 'w-[36px]' },
  { name: '格線', on: false, w: 'w-[36px]' },
  { name: '正交', on: false, w: 'w-[36px]' },
  { name: '極座標', on: true, w: 'w-[51px]' },
  { name: '物件鎖點', on: true, w: 'w-[66px]' },
  { name: '3DOSNAP', on: false, w: 'w-[69px]' },
  { name: '物件追蹤', on: true, w: 'w-[66px]' },
  { name: 'DUCS', on: false, w: 'w-[42px]' },
  { name: '動態', on: false, w: 'w-[36px]' },
  { name: '線粗', on: true, w: 'w-[36px]' },
  { name: 'TPY', on: false, w: 'w-[33px]' },
  { name: 'QP', on: false, w: 'w-[24px]' },
  { name: 'SC', on: false, w: 'w-[24px]' },
];

const statusButton = 'flex shrink-0 items-center justify-center border-r border-[#6c6e73] bg-gradient-to-b from-[#cfcfd1] to-[#b3b4b7]';

const StatusBar = () => {
  const [active, setActive] = useState(modes.map(m => m.on));
  return (
    <footer className="flex h-[23px] shrink-0 items-stretch border-t border-b border-black bg-gradient-to-b from-[#f5f6f8] to-[#cfd2d7] font-['Liberation_Serif','Noto_Sans_CJK_TC',serif] text-sm leading-[22px] text-black">
      <div className="w-[194px] shrink-0 border-r border-[#6c6e73] pl-3 whitespace-nowrap">1633.7117, 1337.5881, 0.0000</div>
      {modes.map((m, i) => (
        <button
          key={m.name}
          type="button"
          aria-pressed={active[i]}
          onClick={() => setActive(prev => prev.map((a, j) => (j === i ? !a : a)))}
          className={`shrink-0 overflow-hidden border-r border-[#6c6e73] pt-px whitespace-nowrap ${m.w} ${
            active[i] ? 'bg-gradient-to-b from-[#e0f3f7] to-[#a9dbe6]' : 'bg-gradient-to-b from-[#cfcfd1] to-[#b3b4b7]'
          }`}
        >
          {m.name}
        </button>
      ))}
      <div className="ml-auto flex">
        <button type="button" className={`w-9 border-l pt-[2px] ${statusButton}`}>模型</button>
        <button type="button" aria-label="quick view layouts" className={`w-[22px] ${statusButton}`}>
          <svg viewBox="0 0 16 16" className="size-4" fill="#fff" stroke="#444"><path d="M3 1.500h11v9H3zM1 14h13" /><path d="M6 3v5h5z" fill="#444" /></svg>
        </button>
        <button type="button" aria-label="quick view drawings" className={`w-[22px] ${statusButton}`}>
          <svg viewBox="0 0 16 16" className="size-4" fill="#fff" stroke="#444"><path d="M1.500 2.500h6v7h-6zM8.500 2.500h6v7h-6zM1 12.500h14v2H1z" /></svg>
        </button>
        <button type="button" aria-label="workspace" className={`ml-5 w-[22px] border-l ${statusButton}`}><Settings size={17} strokeWidth={1.6} fill="#eee" color="#444" /></button>
        <button type="button" aria-label="lock" className={`w-[22px] ${statusButton}`}><Lock size={17} strokeWidth={1.6} fill="#fff" color="#444" /></button>
        <button type="button" aria-label="hardware" className={`w-[23px] ${statusButton}`}>
          <svg viewBox="0 0 18 16" className="h-4 w-[18px]"><path d="M1 3h13v7H1z" fill="#8797a8" stroke="#4b5661" /><path d="M3 10v3M6 10v3M3 0v3M6 0v3M9 0v3M12 0v3" stroke="#4b5661" /><circle cx="14" cy="10" r="3" fill="#ffe09a" stroke="#e8961c" /><path d="M14 13v3" stroke="#e8961c" /></svg>
        </button>
        <button type="button" aria-label="status menu" className={`ml-[3px] w-[11px] ${statusButton}`}><svg viewBox="0 0 6 4" className="h-1 w-[6px]"><path d="M0 0h6L3 4z" /></svg></button>
        <button type="button" aria-label="clean screen" className={`ml-px w-[22px] ${statusButton}`}>
          <svg viewBox="0 0 16 16" className="size-4"><path d="M1 1h14v14H1z" fill="#fff" stroke="#444" /><path d="M1 1h14v4H1z" fill="#555" /></svg>
        </button>
      </div>
    </footer>
  );
};

const apps: { name: string; bg: string; art: React.ReactNode }[] = [
  {
    name: 'Explorer', bg: 'bg-white/20',
    art: (
      <>
        <path d="M4 6h7l2 2h15v16H4z" fill="#f3dc8b" stroke="#b89a45" />
        <path d="M4 12h24v11H4z" fill="#f8e9a9" />
        <path d="M8 27v-7h16v7h-4v-4h-8v4z" fill="#8cc8f0" stroke="#4d90c0" />
      </>
    ),
  },
  {
    name: 'Bird', bg: 'bg-gradient-to-r from-[#4ce04a] from-60% to-[#35597a] to-60%',
    art: <path d="M3 12l11 3 5-10 1 9 8-3-4 6 4 1-7 4-7 5 2-7-5-2-6-3z" fill="#1a8ad8" stroke="#0c5c9c" />,
  },
  {
    name: 'Notebook', bg: 'bg-white/15',
    art: (
      <>
        <path d="M8 9l4-3h14v17l-4 3H8z" fill="#1b2b33" />
        <path d="M8 9h14v16H8z" fill="#5cd3d6" stroke="#dff" />
      </>
    ),
  },
  {
    name: 'AutoCAD', bg: 'bg-white/50',
    art: (
      <>
        <path d="M18 6h10v12H18z" fill="#444" />
        <path d="M18 12l10-5v11z" fill="#888" />
        <path d="M5 23L9 4l7-1 4 16z" fill="#d4161c" />
        <path d="M11 4l2 14 8 3-5-18z" fill="#8d0c10" />
        <path d="M14 20h13v7H14z" fill="#fff" />
      </>
    ),
  },
  {
    name: 'Reader', bg: 'bg-white/20',
    art: (
      <>
        <path d="M6 3h21v26H6z" fill="#f7f2f2" stroke="#b01c1c" />
        <path d="M6 3h21v4H6z" fill="#b01c1c" />
        <path d="M9 24c5-2 8-8 7-13 0 6 3 10 8 9-5-2-10 1-15 4z" fill="none" stroke="#c81e1e" strokeWidth="1.500" />
      </>
    ),
  },
  {
    name: 'QQ', bg: 'bg-white/15',
    art: (
      <>
        <ellipse cx="16" cy="18" rx="9" ry="10" fill="#111" />
        <circle cx="16" cy="9" r="8" fill="#111" />
        <ellipse cx="16" cy="22" rx="6" ry="6" fill="#fff" />
        <circle cx="13" cy="7" r="2.200" fill="#fff" />
        <circle cx="19" cy="7" r="2.200" fill="#fff" />
        <ellipse cx="16" cy="12" rx="5" ry="1.800" fill="#f5a51c" />
        <path d="M7 14c5 3 13 3 18 0l1 5c-6 3-14 3-20 0z" fill="#e0251c" />
        <path d="M8 28h7M17 28h7" stroke="#f5a51c" strokeWidth="3" />
      </>
    ),
  },
];

const Taskbar = () => (
  <nav className="relative flex h-[33px] shrink-0 items-start bg-gradient-to-r from-[#123d69] via-[#0e3763] to-[#0b2747] pl-[71px]">
    <button type="button" aria-label="Start" className="absolute -top-[10px] left-[11px] h-11 w-11">
      <svg viewBox="0 0 44 44" className="size-11">
        <defs>
          <radialGradient id="orb" cx=".5" cy=".9" r=".9">
            <stop offset="0" stopColor="#4fd0f5" />
            <stop offset=".5" stopColor="#1f6fae" />
            <stop offset="1" stopColor="#7f9db5" />
          </radialGradient>
        </defs>
        <circle cx="22" cy="22" r="21" fill="url(#orb)" stroke="#173a5c" />
        <path d="M12 11c4-2 6-2 9 0l-2 10c-3-2-6-2-9 0z" fill="#e8562a" />
        <path d="M23 12c3 1 7 1 11-1l-3 10c-3 2-6 2-10 0z" fill="#8cc63e" />
        <path d="M10 23c3-2 6-2 9 0l-2 9c-3-2-6-2-9 0z" fill="#4aa8e8" />
        <path d="M21 24c3 2 6 2 10 0l-2 9c-3 2-7 2-10 0z" fill="#fbc92e" />
      </svg>
    </button>
    <button type="button" aria-label="Internet Explorer" className="mr-[9px] flex h-8 w-[42px] justify-center rounded-sm border border-white/50 border-r-4 border-r-white/20 bg-white/20">
      <svg viewBox="0 0 32 32" className="size-7">
        <path d="M24 22a8 8 0 1 1 1-6H9" fill="none" stroke="#4fc1f2" strokeWidth="4" />
        <path d="M5 27C1 23 10 8 26 4c4 0 3 5 1 7" fill="none" stroke="#f2c53a" strokeWidth="2" />
      </svg>
    </button>
    <div className="flex gap-1">
      {apps.map(app => (
        <button key={app.name} type="button" aria-label={app.name} className={`flex h-8 w-[46px] items-center justify-center rounded-sm border border-white/50 ${app.bg}`}>
          <svg viewBox="0 0 32 32" className="size-6">{app.art}</svg>
        </button>
      ))}
    </div>
    <div className="ml-auto flex h-full items-start gap-[3px] pt-1">
      <svg viewBox="0 0 150 24" className="h-6 w-[150px]" fill="none">
        <rect x="1" y="2" width="18" height="17" rx="2" fill="#49a4ee" />
        <path d="M4 9l5-4M4 9h10c0 5-3 7-7 8M9 5h6" stroke="#fff" strokeWidth="2" />
        <rect x="25" y="2" width="18" height="18" fill="#fff" />
        <rect x="26" y="3" width="8" height="16" fill="#8a8a8a" />
        <rect x="48" y="2" width="13" height="14" fill="#eee" stroke="#223a8a" />
        <path d="M48 2h13v3H48z" fill="#223a8a" />
        <path d="M50 8h9M50 11h9M50 14h9" stroke="#444" />
        <path d="M58 9l8 9h-4l2 4-2 1-2-5-2 2z" fill="#fff" stroke="#222" strokeWidth=".600" />
        <circle cx="81" cy="10" r="8.500" fill="#2344a8" stroke="#dfe6f5" strokeWidth="1.500" />
        <text x="81" y="15" textAnchor="middle" fontSize="14" fontWeight="bold" fill="#fff" fontFamily="Liberation Sans">?</text>
        <path d="M101 1h6v4h-6zM98 4h5v4h-5z" stroke="#fff" />
        <path d="M99 17h6l-3 3zM119 15h9l-4.500-5z" fill="#fff" />
      </svg>
      <svg viewBox="0 0 20 20" className="mt-px ml-px size-5">
        <path d="M2 3l12-1 4 2-1 14H4z" fill="#6cb4dc" />
        <path d="M5 5l4-1v10h3l1 3H6z" fill="#bfe0f0" />
      </svg>
      <div className="relative flex h-full w-[230px] items-center justify-end gap-3 pr-[10px] text-white">
        <svg viewBox="0 0 110 20" className="h-5 w-[110px]" fill="#fff">
          <path d="M2 3h8v15H2zM4 1h4v2H4z" fill="none" stroke="#fff" strokeWidth="1.500" />
          <path d="M13 2v8M16 2v8M12 10h5" stroke="#fff" />
          <path d="M25 1h2v16h-2zM27 1h7v7h-7z" />
          <path d="M52 6h4l6-5v16l-6-5h-4z" />
          <path d="M77 14h2v4h-2zM81 10h2v8h-2zM85 5h2v13h-2z" />
        </svg>
        <time className="pb-3 font-['Liberation_Sans','Noto_Sans_CJK_TC',sans-serif] text-[15px] leading-5 whitespace-nowrap">下午 08:01</time>
        <span className="absolute top-[7px] left-[21px] font-['DejaVu_Sans','Noto_Sans_CJK_SC',sans-serif] text-[17px] leading-5 whitespace-nowrap text-white [-webkit-text-stroke:3px_#dd3a3a] [paint-order:stroke_fill]">
          三维网www.3dportal.cn
        </span>
      </div>
      <button type="button" aria-label="Show desktop" className="-mt-1 mr-[2px] h-8 w-[13px] border border-[#5a7a9a] bg-white/10" />
    </div>
  </nav>
);

export default function App() {
  return (
    <div className="flex h-screen flex-col overflow-hidden bg-[#aeb0b9]">
      <HeaderBars />
      <div className="flex min-h-0 flex-1 overflow-hidden">
        <aside className="flex shrink-0 items-start gap-[3px] pr-1">
          <div className="space-y-px">
            <VBar
              items={[
                'linear', 'aligned', 'arclen', 'ordinate', '|', 'dimrad', 'jogged', 'diameter', 'angular', '|',
                'quick', 'baseline', 'continue', 'dimspace', 'dimbreak', '|', 'tolerance', 'centermark', 'inspect', 'joglin', '|',
                'dimedit', 'dimtedit', 'dimupdate', '|', 'dimstyle',
              ]}
            />
            <VBar items={['dcalign', 'dchoriz', 'dcvert', 'dcang', 'dcrad', 'dcdia']} />
          </div>
          <VBar
            items={[
              'line', 'xline', 'pline', 'polygon', 'rect', 'arc', 'circle', 'revcloud', 'spline', 'ellipse', 'ellarc',
              'insert', 'block', 'point', 'hatch', 'gradient', 'region', 'table', 'mtext', 'addsel',
            ]}
          />
        </aside>
        <main className="mt-px flex min-w-0 flex-1 flex-col border-t border-l border-[#55575e]">
          <div className="flex min-h-0 flex-1">
            <div className="relative min-w-0 flex-1 cursor-crosshair bg-black">
              <Drawing />
              <ViewCube />
              <NavBar />
            </div>
            <VScroll />
          </div>
          <SheetTabs />
          <CommandLine />
        </main>
        <aside className="shrink-0 space-y-px border-l-2 border-[#e6e6e8] pr-[3px] pl-1">
          <VBar
            items={[
              'erase', 'copyobj', 'mirror', 'offset', 'array', 'move', 'rotate', 'scale', 'stretch', 'trim', 'extend',
              'breakpt', 'break', 'join', 'chamfer', 'fillet', 'blend', 'explode',
            ]}
          />
          <VBar
            items={[
              'track', 'from', '|', 'endpoint', 'midpoint', 'intersect', 'appint', 'extension', '|', 'center2', 'quadrant', 'tangent', '|',
              'perp', 'parallel', 'insertsnap', 'nodesnap', '|', 'nearest', 'none', '|', 'osnap',
            ]}
          />
        </aside>
      </div>
      <StatusBar />
      <Taskbar />
    </div>
  );
}
